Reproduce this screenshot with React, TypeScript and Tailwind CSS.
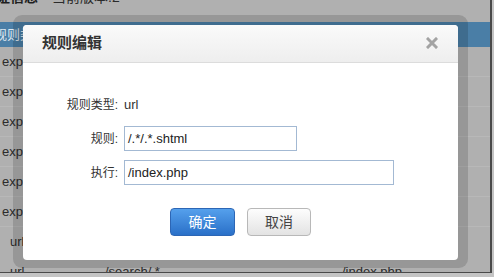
import React from "react";

const FONT = { fontFamily: '"Liberation Sans", Arial, "Noto Sans CJK SC", sans-serif' };

function BgRow({ a, b, c }: { a: string; b?: string; c?: string }) {
  return (
    <div className="h-[30px] shrink-0 flex items-center text-[13px] text-[#2b2b2b] border-b border-[#b8b8b8]">
      <div className="w-[100px] pl-[2px]">{a}</div>
      <div className="w-[237px] pl-[5px]">{b}</div>
      <div className="pl-[5px]">{c}</div>
    </div>
  );
}

export default function App() {
  return (
    <div className="relative w-[494px] h-[277px] overflow-hidden bg-[#c4c4c4]" style={FONT}>
      {/* page under the overlay */}
      <div className="flex h-[273px]">
        <div className="w-[490px] h-[272px] bg-[#b0b0b0] flex flex-col overflow-hidden">
          <div className="h-[22px] shrink-0 overflow-hidden">
            <div className="flex items-start text-[14px] text-[#1f1f1f] leading-[14px] -mt-[10px]">
              <span className="font-bold -ml-[4px]">证信息</span>
              <span className="ml-[14px] text-[#2b2b2b]">当前版本:2</span>
            </div>
          </div>
          <div className="h-[25px] shrink-0 bg-[#4a7ea6] flex items-center text-[13px] text-[#dfe8f0]">
            <span className="-ml-[6px]">规则类型</span>
          </div>
          <BgRow a="expires" />
          <BgRow a="expires" />
          <BgRow a="expires" />
          <BgRow a="expires" />
          <BgRow a="expires" />
          <BgRow a="expires" />
          <div className="h-[30px] shrink-0 flex items-center text-[13px] text-[#2b2b2b]">
            <div className="pl-[10px]">url</div>
          </div>
          <div className="h-[30px] shrink-0 flex items-center text-[13px] text-[#2b2b2b]">
            <div className="w-[105px] pl-[10px]">url</div>
            <div className="w-[237px]">/search/.*</div>
            <div>/index.php</div>
          </div>
        </div>
        <div className="w-[2px] h-[273px] bg-[#4a4a4a]" />
      </div>
      <div className="absolute left-0 top-[272px] w-[491px] h-[1px] bg-[#4a4a4a]" />

      {/* modal halo */}
      <div className="absolute left-[13px] top-[15px] w-[455px] h-[253px] rounded-[9px] bg-black/[0.14]" />

      {/* modal */}
      <div className="absolute left-[23px] top-[25px] w-[435px] h-[235px] bg-white rounded-[4px] overflow-hidden flex flex-col">
        <div className="h-[38px] shrink-0 flex items-center justify-between pl-[19px] pr-[20px] bg-gradient-to-b from-[#fafafa] to-[#eeeeee] border-b border-[#dcdcdc]">
          <span className="text-[15px] font-bold text-[#333]">规则编辑</span>
          <svg width="12" height="12" viewBox="0 0 12 12" className="-mt-[2px]">
            <path d="M2 2 L10 10 M10 2 L2 10" stroke="#a3a3a3" strokeWidth="3" strokeLinecap="square" />
          </svg>
        </div>
        <div className="flex flex-col pt-[29px] text-[12px] text-[#333]">
          <div className="h-[25px] flex items-center">
            <div className="w-[95px] text-right">规则类型:</div>
            <div className="ml-[6px] text-[13px]">url</div>
          </div>
          <div className="h-[25px] flex items-center mt-[9px]">
            <div className="w-[95px] text-right">规则:</div>
            <div className="ml-[6px] w-[173px] h-[25px] border border-[#a3b9d3] flex items-center pl-[3px] text-[#222] text-[13px]">
              /.*/.*.shtml
            </div>
          </div>
          <div className="h-[25px] flex items-center mt-[9px]">
            <div className="w-[95px] text-right">执行:</div>
            <div className="ml-[6px] w-[270px] h-[25px] border border-[#a3b9d3] flex items-center pl-[3px] text-[#222] text-[13px]">
              /index.php
            </div>
          </div>
          <div className="flex mt-[23px] pl-[147px] gap-[12px]">
            <div className="w-[65px] h-[28px] rounded-[4px] border border-[#2d66b5] bg-gradient-to-b from-[#55a0ec] to-[#2a70c8] text-white text-[14px] flex items-center justify-center">
              确定
            </div>
            <div className="w-[64px] h-[28px] rounded-[4px] border border-[#b8b8b8] bg-gradient-to-b from-[#fdfdfd] to-[#e3e3e3] text-[#444] text-[14px] flex items-center justify-center">
              取消
            </div>
          </div>
        </div>
      </div>
    </div>
  );
}
